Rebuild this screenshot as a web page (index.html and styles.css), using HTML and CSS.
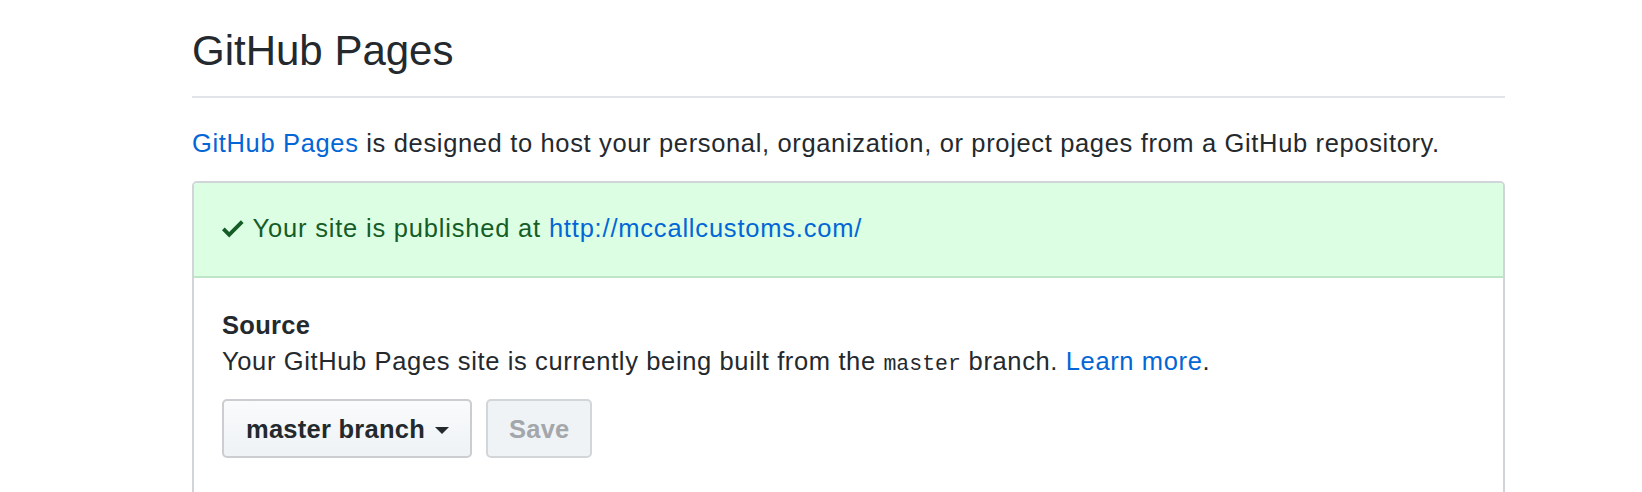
FILE: index.html
```html
<!DOCTYPE html>
<html>
<head>
<meta charset="utf-8">
<link rel="stylesheet" href="styles.css">
</head>
<body>
<div class="page">
  <div class="subhead">
    <h2 class="subhead-heading">GitHub Pages</h2>
  </div>
  <p class="intro"><a class="link" href="#">GitHub Pages</a> is designed to host your personal, organization, or project pages from a GitHub repository.</p>
  <div class="box">
    <div class="flash">
      <svg class="check" viewBox="0 0 12 16" width="21.6" height="28.8"><path fill="currentColor" d="M12 5l-8 8-4-4 1.5-1.5L4 10l6.5-6.5L12 5z"/></svg><span>Your site is published at <a class="link" href="#">http://mccallcustoms.com/</a></span>
    </div>
    <div class="section">
      <div class="section-title">Source</div>
      <div class="section-desc">Your GitHub Pages site is currently being built from the <code class="code">master</code> branch. <a class="link" href="#">Learn more</a>.</div>
      <div class="actions">
        <button class="btn">master branch<span class="caret"></span></button>
        <button class="btn btn-disabled">Save</button>
      </div>
    </div>
  </div>
</div>
</body>
</html>
```
FILE: styles.css
```css
html, body {
  margin: 0;
  padding: 0;
  background: #ffffff;
}
body {
  font-family: "Liberation Sans", Arial, sans-serif;
  color: #24292e;
}
.page {
  margin-left: 192px;
  width: 1313px;
  padding-top: 25px;
}
.subhead {
  padding-bottom: 19px;
  border-bottom: 2px solid #e1e4e8;
}
.subhead-heading {
  margin: 0;
  font-size: 42px;
  line-height: 52px;
  font-weight: 400;
  color: #24292e;
}
.intro {
  margin: 27px 0 20px;
  font-size: 25.5px;
  line-height: 36px;
  letter-spacing: 0.65px;
}
.link {
  color: #0366d6;
  text-decoration: none;
}
.box {
  border: 2px solid #d1d5da;
  border-radius: 5px;
}
.flash {
  background: #dcffe4;
  color: #165c26;
  padding: 27px 28px 29px;
  font-size: 25.5px;
  line-height: 37px;
  letter-spacing: 0.8px;
  border-bottom: 2px solid #bfe5c8;
  border-radius: 3px 3px 0 0;
}
.check {
  vertical-align: -6px;
  margin-right: 9px;
}
.section {
  padding: 30px 28px 60px;
  font-size: 25.5px;
  line-height: 35px;
  letter-spacing: 0.63px;
}
.section-title {
  font-weight: 700;
  letter-spacing: 0.3px;
}
.section-desc {
  margin-top: 1px;
}
.code {
  font-family: "Liberation Mono", "DejaVu Sans Mono", monospace;
  font-size: 21.5px;
  letter-spacing: 0;
}
.actions {
  display: flex;
  gap: 14px;
  margin-top: 17px;
}
.btn {
  display: inline-flex;
  align-items: center;
  box-sizing: border-box;
  height: 59px;
  padding: 0 21px 0 22px;
  border: 2px solid #cbcdd0;
  border-radius: 5px;
  background: linear-gradient(#fafbfc, #eff3f6 90%);
  font-family: "Liberation Sans", Arial, sans-serif;
  font-size: 25.5px;
  font-weight: 700;
  line-height: 36px;
  letter-spacing: 0.25px;
  color: #24292e;
}
.caret {
  display: inline-block;
  width: 0;
  height: 0;
  margin-left: 10px;
  margin-top: 3px;
  border-top: 7px solid #24292e;
  border-left: 7px solid transparent;
  border-right: 7px solid transparent;
}
.btn-disabled {
  padding: 0 20px 0 21px;
  background: #eff3f6;
  color: #a3a7ab;
  border-color: #d3d6d9;
}
```
